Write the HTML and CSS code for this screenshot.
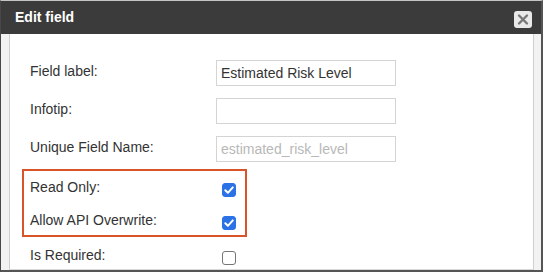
FILE: index.html
```html
<!DOCTYPE html>
<html lang="en">
<head>
<meta charset="utf-8">
<title>Edit field</title>
<link rel="stylesheet" href="styles.css">
</head>
<body>
<div class="dialog">
  <div class="header">
    <span class="title">Edit field</span>
    <span class="close" aria-label="Close">
      <svg width="18" height="17" viewBox="0 0 18 17">
        <path d="M5 4.5 L13 12.5 M13 4.5 L5 12.5" stroke="#777" stroke-width="2.4" stroke-linecap="round" fill="none"/>
      </svg>
    </span>
  </div>
  <div class="body">
    <div class="panel">
      <div class="row">
        <span class="label">Field label:</span>
        <input class="text" type="text" value="Estimated Risk Level">
      </div>
      <div class="row">
        <span class="label">Infotip:</span>
        <input class="text" type="text" value="">
      </div>
      <div class="row">
        <span class="label">Unique Field Name:</span>
        <input class="text muted" type="text" value="estimated_risk_level" readonly>
      </div>
      <div class="highlight">
        <div class="row check-row">
          <span class="label check-label">Read Only:</span>
          <span class="checkbox checked">
            <svg width="14" height="14" viewBox="0 0 14 14"><path d="M3.3 7.2 L5.9 9.8 L10.8 4.4" stroke="#fff" stroke-width="2" fill="none" stroke-linecap="round" stroke-linejoin="round"/></svg>
          </span>
        </div>
        <div class="row check-row second">
          <span class="label check-label">Allow API Overwrite:</span>
          <span class="checkbox checked">
            <svg width="14" height="14" viewBox="0 0 14 14"><path d="M3.3 7.2 L5.9 9.8 L10.8 4.4" stroke="#fff" stroke-width="2" fill="none" stroke-linecap="round" stroke-linejoin="round"/></svg>
          </span>
        </div>
      </div>
      <div class="row check-row required">
        <span class="label check-label">Is Required:</span>
        <span class="checkbox"></span>
      </div>
    </div>
  </div>
</div>
</body>
</html>
```
FILE: styles.css
```css
html, body {
  margin: 0;
  padding: 0;
  background: #ffffff;
}

body {
  font-family: "Liberation Sans", Arial, sans-serif;
  font-size: 14px;
  color: #333333;
}

.dialog {
  width: 540px;
  height: 269px;
  border-top: 1px solid #c4c4c4;
  border-left: 1px solid #474747;
  border-right: 2px solid #555555;
  border-bottom: 2px solid #555555;
  display: flex;
  flex-direction: column;
}

.header {
  height: 33px;
  flex: 0 0 33px;
  background: #3b3b3b;
  display: flex;
  align-items: center;
  justify-content: space-between;
  padding: 0 9px 0 14px;
}

.title {
  color: #ffffff;
  font-weight: bold;
  font-size: 14px;
  padding-bottom: 1px;
}

.close {
  width: 18px;
  height: 17px;
  background: #e9e9e9;
  border-radius: 3px;
  display: flex;
  margin-top: 3px;
}

.body {
  flex: 1 1 auto;
  background: #f2f2f2;
  padding: 0 7px 0 8px;
  display: flex;
}

.panel {
  flex: 1 1 auto;
  background: #ffffff;
  border-left: 1px solid #cfcfcf;
  border-right: 1px solid #cfcfcf;
  border-bottom: 1px solid #d8d8d8;
  padding: 26px 0 0 20px;
}

.row {
  display: flex;
  align-items: center;
  height: 26px;
  margin-bottom: 12px;
}

.label {
  width: 186px;
  flex: 0 0 186px;
  padding-bottom: 5px;
  white-space: nowrap;
}

.text {
  box-sizing: border-box;
  width: 180px;
  height: 26px;
  border: 1px solid #d4d4d4;
  border-radius: 0;
  padding: 0 4px;
  margin: 0;
  font-family: "Liberation Sans", Arial, sans-serif;
  font-size: 14px;
  color: #333333;
  background: #ffffff;
  outline: none;
}

.text.muted {
  color: #b8b8b8;
}

.highlight {
  box-sizing: border-box;
  width: 225px;
  margin: -5px 0 0 -8px;
  border: 2px solid #d9532b;
  padding: 4px 0 3px 6px;
}

.check-row {
  height: 24px;
  margin-bottom: 0;
}

.check-row.second {
  margin-top: 9px;
}

.check-row.required {
  margin-top: 6px;
}

.check-label {
  width: 192px;
  flex: 0 0 192px;
  padding-bottom: 0;
}

.checkbox {
  box-sizing: border-box;
  width: 14px;
  height: 14px;
  flex: 0 0 14px;
  margin-top: 5px;
  border: 1px solid #767676;
  border-radius: 3px;
  background: #ffffff;
  display: flex;
}

.checkbox.checked {
  background: #2a72e6;
  border-color: #2a72e6;
}

.checkbox svg {
  margin: -1px;
}
```
